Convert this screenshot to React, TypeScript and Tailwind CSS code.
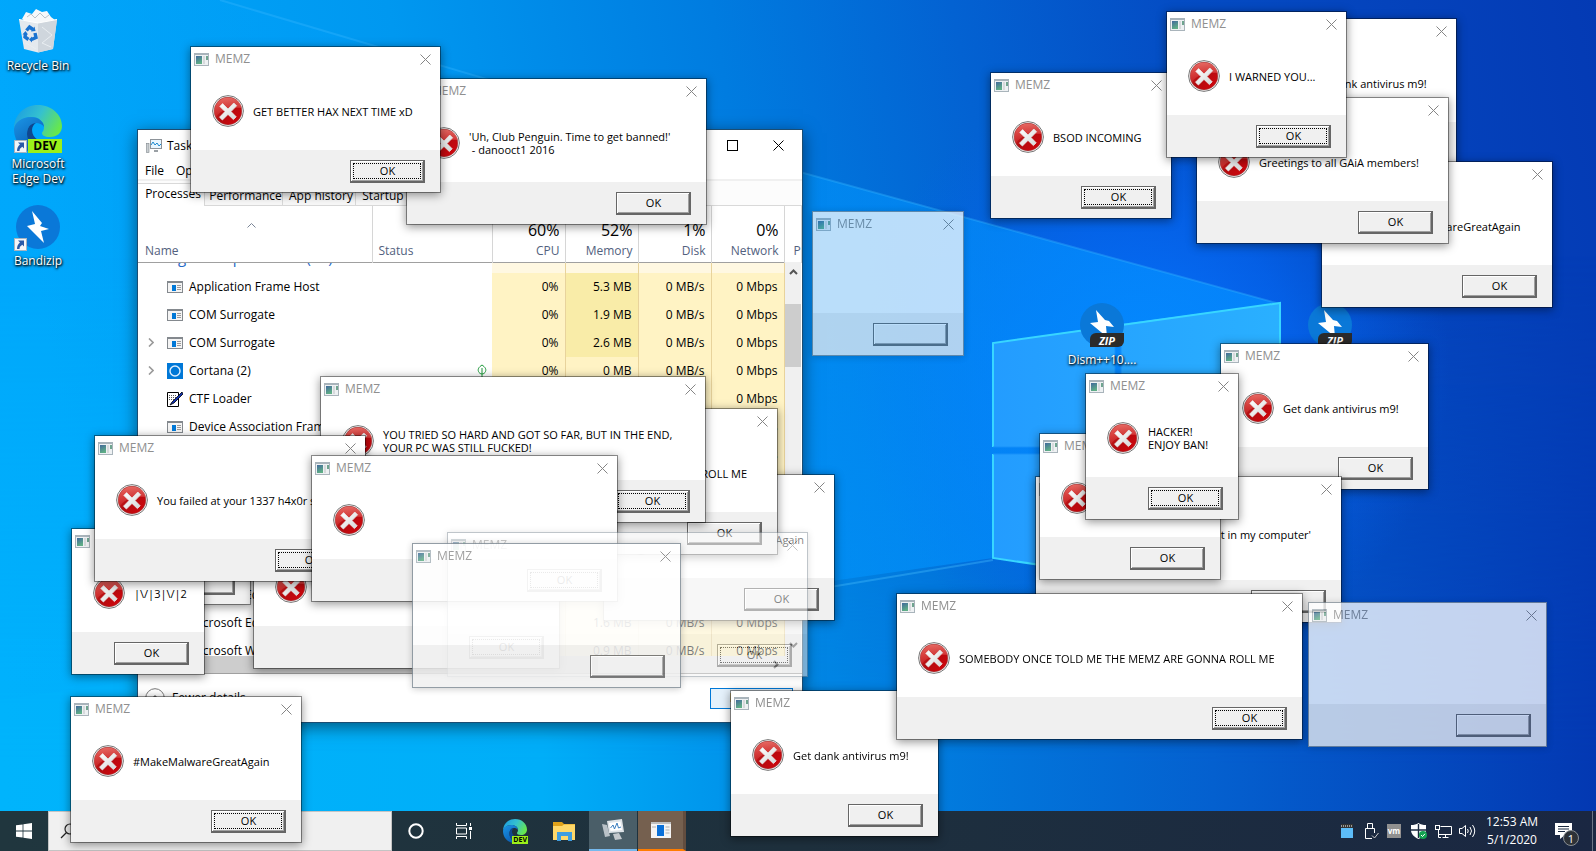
import React from "react";

type DialogProps = {
  place: string;
  lines?: string[];
  icon?: boolean;
  focused?: boolean;
  label?: string;
  fromEnd?: boolean;
  fading?: boolean;
};

function ErrorIcon() {
  return (
    <svg viewBox="0 0 32 32" className="size-8 shrink-0" aria-hidden="true">
      <defs>
        <linearGradient id="errBody" x1="0" y1="0" x2="1" y2="1">
          <stop offset="0" stopColor="#d9302c" />
          <stop offset="0.5" stopColor="#b30c10" />
          <stop offset="1" stopColor="#d8040c" />
        </linearGradient>
        <linearGradient id="errGloss" x1="0" y1="0" x2="0" y2="1">
          <stop offset="0" stopColor="#f08078" stopOpacity="0.75" />
          <stop offset="1" stopColor="#e04040" stopOpacity="0.35" />
        </linearGradient>
        <linearGradient id="errX" x1="0" y1="0" x2="1" y2="1">
          <stop offset="0" stopColor="#ffffff" />
          <stop offset="1" stopColor="#d4d8d8" />
        </linearGradient>
      </defs>
      <circle cx="16" cy="16" r="15.4" fill="#fff" stroke="#777" strokeWidth="1" />
      <circle cx="16" cy="16" r="13.9" fill="url(#errBody)" stroke="#8a5050" strokeWidth="0.5" />
      <path d="M2.4 17C2.4 8.600 8.500 2.400 16 2.400S29.600 8 29.600 13C22 12 10 13 4 22C2.900 20 2.400 19 2.400 17Z" fill="url(#errGloss)" />
      <path
        d="M10.600 8.600 16 14l5.800-6 2.800 2.800L19 16.600l5.200 5.200-2.800 2.800L16 19.400l-5.600 5.600-2.900-2.800L13 16.600 7.800 11.400Z"
        fill="url(#errX)"
        stroke="#e8e8e8"
        strokeWidth="0.8"
        strokeLinejoin="round"
      />
    </svg>
  );
}

function AppGlyph() {
  return (
    <svg viewBox="0 0 16 15" className="h-[15px] w-4 shrink-0" aria-hidden="true">
      <defs>
        <linearGradient id="glyphFill" x1="0" y1="0" x2="0.4" y2="1">
          <stop offset="0" stopColor="#41699c" />
          <stop offset="1" stopColor="#5fae86" />
        </linearGradient>
      </defs>
      <rect x="0.500" y="1.500" width="14" height="12" fill="#eef1f3" stroke="#a9b4bb" />
      <path d="M0 2H15" stroke="#a9b4bb" strokeWidth="2" />
      <rect x="2" y="4" width="6" height="8" fill="url(#glyphFill)" />
      <rect x="9" y="4" width="2" height="8" fill="#d7dadc" />
      <rect x="12" y="4" width="2" height="4" fill="#6fa48f" />
    </svg>
  );
}

function Cross({ className }: { className: string }) {
  return (
    <svg viewBox="0 0 11 11" className={className} aria-hidden="true">
      <path d="M.5.5l10 10M10.500.5l-10 10" stroke="currentColor" strokeWidth="1" fill="none" />
    </svg>
  );
}

function Dialog({ place, lines = [], icon = true, focused, label = "OK", fromEnd, fading }: DialogProps) {
  const frame = fading
    ? "border-[#7f8b94] shadow-[0_1px_7px_rgba(0,0,0,0.25)]"
    : "border-[#00000066] shadow-[0_2px_9px_rgba(0,0,0,0.42)]";
  return (
    <section aria-label="MEMZ" className={`absolute flex flex-col border bg-white bg-clip-padding ${frame} ${place}`}>
      <header className="flex h-6 items-center pl-[3px] pr-[9px] text-xs text-[#8f8f8f]">
        <AppGlyph />
        <h2 className="ml-[5px] flex-1 leading-none">MEMZ</h2>
        <button type="button" aria-label="Close" className="text-[#858585]">
          <Cross className="size-[11px]" />
        </button>
      </header>
      <div className={`flex gap-[9px] overflow-hidden pl-[21px] pr-[30px] pt-6 ${fading ? "h-[77px]" : "h-[79px]"}`}>
        {icon && <ErrorIcon />}
        <p
          className={`flex h-8 min-w-0 flex-1 flex-col justify-center whitespace-pre text-[11px] leading-[13px] text-black ${
            fromEnd ? "items-end" : "items-start"
          }`}
        >
          {lines.map((line) => (
            <span key={line}>{line}</span>
          ))}
        </p>
      </div>
      <footer className="flex h-[42px] items-start justify-end bg-[#f0f0f0] pr-[15px] pt-[10px]">
        <button
          type="button"
          aria-label="OK"
          className="flex h-[23px] w-[75px] items-stretch border border-b-2 border-r-2 border-[#666] bg-[#f0f0f0] p-[2px] text-[11px] leading-none text-black shadow-[inset_1px_1px_0_#fff,inset_-1px_-1px_0_#a0a0a0]"
        >
          <span
            className={`flex flex-1 items-center justify-center border pb-[2px] pl-px ${
              focused ? "border-dotted border-black" : "border-transparent"
            }`}
          >
            {label}
          </span>
        </button>
      </footer>
    </section>
  );
}

const dank = ["Get dank antivirus m9!"];
const great = ["#MakeMalwareGreatAgain"];
const somebody = ["SOMEBODY ONCE TOLD ME THE MEMZ ARE GONNA ROLL ME"];

const dialogs: DialogProps[] = [
  { place: "left-[406px] top-[78px] w-[301px]", lines: ["'Uh, Club Penguin. Time to get banned!'", " - danooct1 2016"] },
  { place: "left-[190px] top-[46px] w-[251px]", lines: ["GET BETTER HAX NEXT TIME xD"], focused: true },
  { place: "left-[1248px] top-[18px] w-[209px]", lines: dank },
  { place: "left-[1321px] top-[161px] w-[232px]", lines: great },
  { place: "left-[1196px] top-[97px] w-[253px]", lines: ["Greetings to all GAiA members!"] },
  { place: "left-[990px] top-[72px] w-[182px]", lines: ["BSOD INCOMING"], focused: true },
  { place: "left-[1166px] top-[11px] w-[181px]", lines: ["I WARNED YOU..."], focused: true },
  { place: "left-[812px] top-[211px] w-[152px] opacity-[0.73]", icon: false, label: "", fading: true },
  { place: "left-[1220px] top-[343px] w-[209px]", lines: dank },
  { place: "left-[1035px] top-[476px] w-[307px]", lines: ["t in my computer'", " "], fromEnd: true, label: "" },
  { place: "left-[1039px] top-[433px] w-[182px]" },
  { place: "left-[1085px] top-[373px] w-[154px]", lines: ["HACKER!", "ENJOY BAN!"], focused: true },
  { place: "left-[603px] top-[474px] w-[232px]", lines: great, fromEnd: true },
  { place: "left-[371px] top-[408px] w-[407px]", lines: ["ROLL ME"], fromEnd: true },
  {
    place: "left-[320px] top-[376px] w-[386px]",
    lines: ["YOU TRIED SO HARD AND GOT SO FAR, BUT IN THE END,", "YOUR PC WAS STILL FUCKED!"],
    focused: true,
  },
  { place: "left-[99px] top-[458px] w-[152px]", label: "" },
  { place: "left-[253px] top-[522px] w-[307px]", focused: true },
  { place: "left-[71px] top-[528px] w-[134px]", lines: ["|\\/|3|\\/|2"] },
  { place: "left-[94px] top-[435px] w-[272px]", lines: ["You failed at your 1337 h4x0r s"], focused: true },
  { place: "left-[311px] top-[455px] w-[307px]", focused: true },
  { place: "left-[70px] top-[696px] w-[232px]", lines: great, focused: true },
  { place: "left-[447px] top-[532px] w-[361px] opacity-50", icon: false, focused: true, fading: true },
  { place: "left-[412px] top-[543px] w-[269px] opacity-[0.84]", icon: false, label: "", fading: true },
  { place: "left-[730px] top-[690px] w-[209px]", lines: dank },
  { place: "left-[896px] top-[593px] w-[407px]", lines: somebody, focused: true },
  { place: "left-[1308px] top-[602px] w-[239px] opacity-[0.77]", icon: false, label: "", fading: true },
];

function Wallpaper() {
  return (
    <svg viewBox="0 0 1596 851" preserveAspectRatio="none" className="absolute inset-0 h-full w-full" aria-hidden="true">
      <defs>
        <linearGradient id="sky" x1="0" y1="0.1" x2="1" y2="0">
          <stop offset="0" stopColor="#00a8fc" />
          <stop offset="0.25" stopColor="#0098f0" />
          <stop offset="0.45" stopColor="#007ce0" />
          <stop offset="0.6" stopColor="#0362d2" />
          <stop offset="0.74" stopColor="#044cc4" />
          <stop offset="1" stopColor="#043ab4" />
        </linearGradient>
        <linearGradient id="low" x1="0" y1="0" x2="1" y2="0">
          <stop offset="0" stopColor="#00b4fc" />
          <stop offset="0.34" stopColor="#00aef8" />
          <stop offset="0.52" stopColor="#0086e4" />
          <stop offset="0.76" stopColor="#0460cf" />
          <stop offset="1" stopColor="#0338b2" />
        </linearGradient>
        <linearGradient id="lowFade" x1="0" y1="0" x2="0" y2="1">
          <stop offset="0.3" stopColor="#fff" stopOpacity="0" />
          <stop offset="0.9" stopColor="#fff" />
        </linearGradient>
        <mask id="lowMask">
          <rect width="1596" height="851" fill="url(#lowFade)" />
        </mask>
        <radialGradient id="glow" gradientUnits="userSpaceOnUse" cx="1150" cy="370" r="300">
          <stop offset="0" stopColor="#0676ff" />
          <stop offset="0.5" stopColor="#0568f4" stopOpacity="0.7" />
          <stop offset="1" stopColor="#0560e8" stopOpacity="0" />
        </radialGradient>
        <linearGradient id="beam" x1="0" y1="0" x2="1" y2="0">
          <stop offset="0" stopColor="#00a6fb" stopOpacity="0.1" />
          <stop offset="0.5" stopColor="#0098fc" stopOpacity="0.6" />
          <stop offset="1" stopColor="#058cff" />
        </linearGradient>
        <linearGradient id="pane" x1="0" y1="0" x2="1" y2="0">
          <stop offset="0" stopColor="#239cff" />
          <stop offset="1" stopColor="#2ab0ff" />
        </linearGradient>
      </defs>
      <rect width="1596" height="851" fill="url(#sky)" />
      <rect width="1596" height="851" fill="url(#low)" mask="url(#lowMask)" />
      <circle cx="1150" cy="370" r="300" fill="url(#glow)" />
      <path d="M220 0 800 172 1280 304V600L993 558 700 600 0 700V0Z" fill="url(#beam)" opacity="0.8" />
      <path d="M220 0 800 172 1280 304" stroke="#38b6ff" strokeOpacity="0.35" strokeWidth="2" fill="none" />
      <path d="M800 592 993 560" stroke="#4cc4ff" strokeOpacity="0.35" strokeWidth="2" fill="none" />
      <path d="M993 343 1115 325V447H993ZM1121 324 1280 303V447H1121ZM993 454H1115V573L993 558ZM1121 454H1280V600L1121 575Z" fill="url(#pane)" />
      <path d="M993 447V343L1280 303V447M993 454V558L1280 600V454" stroke="#38d6ff" strokeWidth="2" fill="none" />
      <path d="M993 447H1280M993 454H1280M1115 325V573M1121 324V574" stroke="#1690fa" strokeWidth="1" fill="none" />
    </svg>
  );
}

function ShortcutArrow() {
  return (
    <svg viewBox="0 0 13 13" className="absolute bottom-0 left-0 size-[13px]" aria-hidden="true">
      <rect x="0.500" y="0.500" width="12" height="12" fill="#f4f6f8" stroke="#a8b4c0" />
      <path d="M4 2.500H10V8.500L8.300 6.800C6.500 8 5.500 9 5.500 11H3C3 8 4 6 6 4.500Z" fill="#2a5aa8" />
    </svg>
  );
}

function RecycleBin() {
  return (
    <svg viewBox="0 0 40 44" className="h-11 w-10" aria-hidden="true">
      <path d="M4 10 8 3 14 5 18 0 24 3 29 2 33 8 37 11 30 14H10Z" fill="#f6f8fa" />
      <path d="M9 8 13 5 17 9 22 4 27 9 31 6" stroke="#b9c2ca" fill="none" />
      <path d="M1 10.500 20 14 39 10.500 35 40 20 43.500 6 40Z" fill="#e4e9ee" />
      <path d="M20 14 39 10.500 35 40 20 43.500Z" fill="#cfd6dd" />
      <path d="M1 10.500 20 14 39 10.500" stroke="#fff" fill="none" strokeWidth="1" />
      <path d="M24 18 34 26 24 34 33 38M8 34 18 40" stroke="#e9eef2" fill="none" />
      <g fill="none" stroke="#1a73d0" strokeWidth="3.400">
        <path d="M8.500 21.500 11.500 18 15 20.500" />
        <path d="M17 24 18 28.500 13.500 30.500" />
        <path d="M10.500 30.500 7 28 7.500 24.500" />
      </g>
      <path d="M13 22.500 17.500 22 16.500 17.500ZM14 27.500V33.500L11 30.500ZM4.500 25.500 7.500 22 10 25.500Z" fill="#1a73d0" />
    </svg>
  );
}

function EdgeLogo({ className }: { className: string }) {
  return (
    <svg viewBox="0 0 48 48" className={className} aria-hidden="true">
      <defs>
        <linearGradient id="edgeTop" x1="0" y1="0.2" x2="1" y2="0.6">
          <stop offset="0" stopColor="#1b9de2" />
          <stop offset="0.5" stopColor="#35c1cf" />
          <stop offset="1" stopColor="#68e84a" />
        </linearGradient>
        <linearGradient id="edgeLow" x1="0" y1="0" x2="0.6" y2="1">
          <stop offset="0" stopColor="#1b96e6" />
          <stop offset="1" stopColor="#0a5cb4" />
        </linearGradient>
      </defs>
      <path d="M0 24C0 10 10 0 24 0S48 10 48 21C48 28 43 32 36 32C30 32 28 30 28 28C28 27 30 26 30 22C30 17 25 12 17 12C8 12 1 18 0 24Z" fill="url(#edgeTop)" />
      <path d="M0 24C1 17 8 12 17 12C25 12 30 17 30 22C28 19 25 18 22 18C16 18 13 23 13 29C13 38 19 45 28 47.500C12 50 0 39 0 24Z" fill="url(#edgeLow)" />
      <path d="M22 18C16 18 13 23 13 29C13 38 19 46 29 47.300C36 46 41 42 44 37C34 41 18 36 18 25C18 22 20 19 22 18Z" fill="#10478f" />
    </svg>
  );
}

function Bolt({ zip }: { zip?: boolean }) {
  return (
    <svg viewBox="0 0 44 44" className="size-11" aria-hidden="true">
      <circle cx="22" cy="22" r="22" fill="#0a78d8" />
      {zip ? (
        <path d="M16 7 25 17 29 18 34 24 26 23 27 34 10 20 18 19Z" fill="#fff" />
      ) : (
        <path d="M16 6 26 18 24 21 33 24 25 26 28 38 11 21 19 19Z" fill="#fff" />
      )}
    </svg>
  );
}

const shade = "[text-shadow:1px_1px_2px_#000,0_1px_3px_#000]";

function DesktopIcon({ place, label, children }: { place: string; label: React.ReactNode; children: React.ReactNode }) {
  return (
    <a href="#open" className={`absolute flex w-[76px] flex-col items-center text-center text-xs leading-[15px] text-white ${shade} ${place}`}>
      {children}
      <span className="whitespace-nowrap">{label}</span>
    </a>
  );
}

function ZipPicture() {
  return (
    <span className="relative mb-[5px] block">
      <Bolt zip />
      <span className="absolute bottom-0 right-0 flex h-[14px] w-[34px] items-center justify-center rounded-br-md rounded-tl-md bg-[#2b2b2b] text-[11px] font-bold italic leading-none [text-shadow:none]">
        ZIP
      </span>
    </span>
  );
}

function ProcessIcon({ kind }: { kind: string }) {
  if (kind === "cortana")
    return (
      <svg viewBox="0 0 16 16" className="size-4" aria-hidden="true">
        <rect width="16" height="16" fill="#0078d7" />
        <circle cx="8" cy="8" r="5" fill="none" stroke="#dff0ff" strokeWidth="1.400" />
      </svg>
    );
  if (kind === "ctf")
    return (
      <svg viewBox="0 0 16 16" className="size-4" aria-hidden="true">
        <path d="M.5 1.500H11.500V15.500H.5Z" fill="#fff" stroke="#000" />
        <path d="M2 4.500H10M2 6.500H9M2 8.500H7" stroke="#555" strokeDasharray="1 1" />
        <path d="M15 1 5 11 3 14 7 12 16 3Z" fill="#1030b0" stroke="#000" strokeWidth="0.800" />
      </svg>
    );
  return (
    <svg viewBox="0 0 16 16" className="size-4" aria-hidden="true">
      <rect x="0.500" y="2.500" width="15" height="11" fill="#f4f4f4" stroke="#84898e" />
      <path d="M0 3H16" stroke="#84898e" strokeWidth="2" />
      <rect x="5" y="6" width="4" height="6" fill="#0078d7" />
      <path d="M10 6.500H14M10 8.500H14M10 10.500H14" stroke="#9a9a9a" />
    </svg>
  );
}

type Process = { name: string; kind?: string; group?: boolean; memory: string; heavy?: boolean; leaf?: boolean };

const processes: Process[] = [
  { name: "Application Frame Host", memory: "5.3 MB", heavy: true },
  { name: "COM Surrogate", memory: "1.9 MB", heavy: true },
  { name: "COM Surrogate", memory: "2.6 MB", heavy: true, group: true },
  { name: "Cortana (2)", memory: "0 MB", kind: "cortana", group: true, leaf: true },
  { name: "CTF Loader", memory: "", kind: "ctf" },
  { name: "Device Association Framewo...", memory: "" },
  { name: "", memory: "" },
  { name: "", memory: "" },
  { name: "", memory: "" },
  { name: "", memory: "" },
  { name: "", memory: "" },
  { name: "Microsoft Edge", memory: "" },
  { name: "Microsoft Edge", memory: "1.6 MB" },
  { name: "Microsoft Windows", memory: "0.9 MB" },
];

const numCell = "border-r border-[#e8d39c] pr-[6px] text-right";
const tab = "h-[21px] border border-[#d9d9d9] bg-[#f8f8f8] pl-1";

function TaskManager() {
  return (
    <section
      aria-label="Task Manager"
      className="absolute left-[137px] top-[129px] flex h-[594px] w-[666px] flex-col border border-[#1b4d73] bg-white text-xs text-black shadow-[0_4px_16px_rgba(0,0,0,0.5)]"
    >
      <header className="flex h-[31px] shrink-0 items-center pl-2">
        <svg viewBox="0 0 16 14" className="h-[14px] w-4" aria-hidden="true">
          <rect x="4.500" y="0.500" width="11" height="9" fill="#e8f6ff" stroke="#8d9399" />
          <path d="M5 6 7 3 9 6 11 4 13 7 15 5" stroke="#1c8ad0" fill="none" />
          <path d="M8 11H12V13H8Z" fill="#9aa0a5" />
          <rect x="0.500" y="4.500" width="2.500" height="9" fill="#c9ced2" stroke="#7e858b" strokeWidth="0.600" />
        </svg>
        <h1 className="ml-[5px] flex-1">Task Manager</h1>
        <button type="button" aria-label="Maximize" className="mr-[35px] size-[11px] border border-black" />
        <button type="button" aria-label="Close" className="mr-[18px]">
          <Cross className="size-[11px]" />
        </button>
      </header>
      <nav className="flex h-[20px] shrink-0 items-center gap-3 border-b-2 border-[#f0f0f0] pl-[7px] pt-[2px]">
        <button type="button">File</button>
        <button type="button">Options</button>
      </nav>
      <div role="tablist" className="flex h-[25px] shrink-0 items-end bg-[#fcfcfc]">
        <button type="button" role="tab" aria-selected="true" className="h-[23px] w-[66px] border-t border-[#d9d9d9] bg-white pb-[2px] pl-1">
          Processes
        </button>
        <button type="button" role="tab" className={`${tab} w-[79px]`}>Performance</button>
        <button type="button" role="tab" className={`${tab} w-[73px] border-l-0`}>App history</button>
        <button type="button" role="tab" className={`${tab} w-[51px] border-l-0`}>Startup</button>
        <span className="h-px flex-1 bg-[#d9d9d9]" />
      </div>
      <div className="relative h-[450px] shrink-0 overflow-hidden">
        <table className="w-[664px] table-fixed border-collapse text-xs">
          <colgroup>
            <col className="w-[234px]" />
            <col className="w-[120px]" />
            <col className="w-[73px]" />
            <col className="w-[73px]" />
            <col className="w-[73px]" />
            <col className="w-[73px]" />
            <col />
          </colgroup>
          <thead className="text-[#52617e]">
            <tr className="h-[56px] border-b border-[#a0a0a0] bg-white align-bottom [&>th]:border-r [&>th]:border-[#d6d6d6] [&>th]:font-normal [&>th]:leading-[16px]">
              <th className="pb-[3px] pl-[7px] text-left">
                <svg viewBox="0 0 9 5" className="mb-[15px] ml-[102px] h-[5px] w-[9px]" aria-hidden="true">
                  <path d="M.5 4.500 4.500.5 8.500 4.500" stroke="#7a8596" fill="none" />
                </svg>
                Name
              </th>
              <th className="pb-[3px] pl-[6px] text-left">Status</th>
              {[
                ["60%", "CPU"],
                ["52%", "Memory"],
                ["1%", "Disk"],
                ["0%", "Network"],
              ].map(([value, title]) => (
                <th key={title} className="pb-[3px] pr-[5px] text-right">
                  <span className="mb-[4px] block text-base leading-[18px] text-black">{value}</span>
                  {title}
                </th>
              ))}
              <th className="overflow-hidden whitespace-nowrap pb-[3px] pl-[9px] text-left">P</th>
            </tr>
          </thead>
          <tbody>
            <tr>
              <td colSpan={2} className="h-[10px] p-0">
                <div className="flex h-[10px] items-end overflow-hidden pl-[7px]">
                  <span className="mb-[7px] text-[15px] leading-[18px] text-[#2468c8]">Background processes (31)</span>
                </div>
              </td>
              {[0, 1, 2, 3].map((n) => (
                <td key={n} className="border-r border-[#e8d39c] bg-[#fff8e2]" />
              ))}
              <td />
            </tr>
            {processes.map((p, i) => (
              <tr key={i} className="h-7">
                <td className="p-0">
                  <div className="flex items-center overflow-hidden whitespace-nowrap pl-[10px]">
                    <span className="w-[19px]">
                      {p.group && (
                        <svg viewBox="0 0 6 9" className="h-[9px] w-[6px]" aria-hidden="true">
                          <path d="M1 .5 5 4.500 1 8.500" stroke="#9a9a9a" strokeWidth="1.600" fill="none" />
                        </svg>
                      )}
                    </span>
                    {p.name && <ProcessIcon kind={p.kind ?? "window"} />}
                    <span className="ml-[6px]">{p.name}</span>
                  </div>
                </td>
                <td className="p-0 pr-[5px]">
                  {p.leaf && (
                    <svg viewBox="0 0 10 13" className="ml-auto h-[13px] w-[10px]" aria-hidden="true">
                      <path d="M5 1C8 3 9.500 5 8.500 7.500 8 9 6.500 10 5 10S2 9 1.500 7.500C.5 5 2 3 5 1ZM5 4V13" stroke="#1f9a3c" fill="none" />
                    </svg>
                  )}
                </td>
                <td className={`${numCell} bg-[#fff3c4]`}>{i < 4 && "0%"}</td>
                <td className={`${numCell} ${p.heavy ? "bg-[#f9eca8]" : "bg-[#fff3c4]"}`}>{p.memory}</td>
                <td className={`${numCell} bg-[#fff3c4]`}>0 MB/s</td>
                <td className={`${numCell} bg-[#fff3c4]`}>0 Mbps</td>
                <td />
              </tr>
            ))}
          </tbody>
        </table>
        <div className="absolute bottom-0 right-px top-[56px] flex w-4 flex-col items-center bg-[#f0f0f0] pt-[7px]">
          <svg viewBox="0 0 9 6" className="h-[6px] w-[9px]" aria-hidden="true">
            <path d="M1 5 4.500 1.500 8 5" stroke="#555" strokeWidth="2" fill="none" />
          </svg>
          <div className="mt-[29px] h-[63px] w-full bg-[#cdcdcd]" />
          <svg viewBox="0 0 9 6" className="mt-[275px] h-[6px] w-[9px]" aria-hidden="true">
            <path d="M1 1 4.500 4.500 8 1" stroke="#555" strokeWidth="2" fill="none" />
          </svg>
        </div>
      </div>
      <div className="flex h-[18px] shrink-0 items-center border-b border-[#a0a0a0] bg-[#f0f0f0]">
        <div className="h-full w-[460px] bg-[#cdcdcd]" />
        <svg viewBox="0 0 6 9" className="ml-[175px] h-[9px] w-[6px]" aria-hidden="true">
          <path d="M1 1 4.500 4.500 1 8" stroke="#555" strokeWidth="2" fill="none" />
        </svg>
      </div>
      <footer className="flex flex-1 items-center pl-[7px] pr-[9px]">
        <button type="button" className="flex flex-1 items-center gap-[7px]">
          <svg viewBox="0 0 20 20" className="size-5" aria-hidden="true">
            <circle cx="10" cy="10" r="9.300" stroke="#777" fill="none" />
            <path d="M6.500 11.500 10 8 13.500 11.500" stroke="#777" strokeWidth="1.500" fill="none" />
          </svg>
          Fewer details
        </button>
        <button type="button" className="h-[21px] w-[83px] border border-[#0078d7] bg-[#e5f1fb] pl-1">End task</button>
      </footer>
    </section>
  );
}

function Taskbar() {
  return (
    <footer className="relative flex h-10 items-stretch bg-linear-to-r from-[#20363e] via-[#1e303d] to-[#1a2742] text-white">
      <button type="button" aria-label="Start" className="flex w-12 items-center justify-center">
        <svg viewBox="0 0 16 16" className="size-4" aria-hidden="true">
          <path d="M0 2.300 6.600 1.400V7.600H0ZM7.400 1.300 16 0V7.600H7.400ZM0 8.400H6.600V14.600L0 13.700ZM7.400 8.400H16V16L7.400 14.700Z" fill="#fff" />
        </svg>
      </button>
      <label className="flex w-[344px] items-center border border-[#c4c4c4] bg-[#f0f0f0] pl-[11px]">
        <svg viewBox="0 0 16 16" className="size-4" aria-hidden="true">
          <circle cx="10" cy="6" r="5" stroke="#222" strokeWidth="1.200" fill="none" />
          <path d="M6.500 9.500 1 15" stroke="#222" strokeWidth="1.200" />
        </svg>
        <input aria-label="Search" className="ml-2 min-w-0 flex-1 bg-transparent text-sm text-black outline-none" />
      </label>
      <button type="button" aria-label="Cortana" className="flex w-12 items-center justify-center">
        <svg viewBox="0 0 16 16" className="size-4" aria-hidden="true">
          <circle cx="8" cy="8" r="6.700" stroke="#fff" strokeWidth="2" fill="none" />
        </svg>
      </button>
      <button type="button" aria-label="Task View" className="flex w-12 items-center justify-center">
        <svg viewBox="0 0 16 16" className="size-4" aria-hidden="true">
          <path d="M.5 0V2.500H10.500V0M.5 16V13.500H10.500V16M.5 5H10.500V11H.5ZM14.500 0V3M14.500 8V16" stroke="#fff" fill="none" />
          <rect x="13" y="4" width="3" height="3" fill="#fff" />
        </svg>
      </button>
      <button type="button" aria-label="Microsoft Edge Dev" className="flex w-[54px] items-center justify-center">
        <span className="relative">
          <EdgeLogo className="size-6" />
          <span className="absolute -bottom-px -right-px bg-[#9bf01a] px-px text-[7px] font-bold leading-[8px] text-black">DEV</span>
        </span>
      </button>
      <button type="button" aria-label="File Explorer" className="flex w-[43px] items-center justify-center">
        <svg viewBox="0 0 22 19" className="h-[19px] w-[22px]" aria-hidden="true">
          <path d="M0 0H9L11 2H22V18H0Z" fill="#e0a21a" />
          <path d="M0 4H9L11 2.500H22V18H0Z" fill="#ffd869" />
          <path d="M4 10H19V19H15V14H8V19H4Z" fill="#3f9de0" />
        </svg>
      </button>
      <button type="button" aria-label="Task Manager" className="ml-1 flex w-12 items-center justify-center border-b-2 border-[#76b9ed] bg-[#4a5e68]">
        <svg viewBox="0 0 24 22" className="h-[22px] w-6" aria-hidden="true">
          <path d="M6 2 21 0 23 13 8 14Z" fill="#dfe4e8" />
          <path d="M8 4 19.500 2.500 21 11 9.500 12Z" fill="#fff" />
          <path d="M9.500 9 12 6 13.500 10 16 4 17.500 9 20 8" stroke="#3b7ec0" fill="none" />
          <path d="M1 5 6 6 9 17 4 18Z" fill="#b9c1c7" />
          <path d="M12 15 18 14 21 20 14 21Z" fill="#c4c9cd" />
        </svg>
      </button>
      <button type="button" aria-label="MEMZ" className="ml-px flex w-12 items-center justify-center border-b-2 border-r-3 border-b-[#ff7d00] border-r-[#624d3f] bg-[#75604f]">
        <svg viewBox="0 0 20 16" className="h-4 w-5" aria-hidden="true">
          <rect width="20" height="16" fill="#f4f4f4" />
          <path d="M0 1H20" stroke="#c0c0c0" strokeWidth="2" />
          <rect x="6" y="3" width="7" height="11" fill="#0a70d8" />
          <path d="M14.500 5H18.500M14.500 8H18.500M14.500 11H18.500M1 5H5" stroke="#b0b0b0" />
        </svg>
      </button>
      <div className="ml-auto flex items-center">
        <svg viewBox="0 0 12 14" className="h-[14px] w-3" aria-hidden="true">
          <rect width="12" height="4" fill="#333" />
          <path d="M0 2H12" stroke="#999" strokeWidth="2" strokeDasharray="1 1" />
          <rect y="4" width="12" height="10" fill="#5cbcf8" />
        </svg>
        <svg viewBox="0 0 14 16" className="ml-3 h-4 w-[14px]" aria-hidden="true">
          <path d="M2.500 5V.5H7.500V5M.5 5.500H9.500V10M.5 5.500V15.500H7" stroke="#fff" fill="none" />
          <path d="M7 12.500 9.500 15 13.500 10" stroke="#c8c8c8" fill="none" />
        </svg>
        <span className="ml-2 flex size-[14px] items-center justify-center overflow-hidden bg-[#909090] text-[8px] font-bold leading-none">vm</span>
        <svg viewBox="0 0 16 16" className="ml-[10px] size-4" aria-hidden="true">
          <path d="M7.500 0C9.500 1.500 12 2 15 2V7C15 11 12 14 7.500 16 3 14 0 11 0 7V2C3 2 5.500 1.500 7.500 0Z" fill="#fff" />
          <path d="M7.500 1V15M0 7H15" stroke="#1b2a40" strokeWidth="1.400" />
          <circle cx="12" cy="12" r="4" fill="#12a150" />
          <path d="M10 12 11.500 13.500 14 10.800" stroke="#fff" fill="none" />
        </svg>
        <svg viewBox="0 0 17 15" className="ml-2 h-[15px] w-[17px]" aria-hidden="true">
          <path d="M5.500 2.500H16.500V10.500H3.500M3.500 6V13.500H6M10.500 10.500V13M7.500 13.500H13.500" stroke="#fff" fill="none" />
          <rect x="0.500" y="1.500" width="4" height="4" fill="#1b2a40" stroke="#fff" />
        </svg>
        <svg viewBox="0 0 17 14" className="ml-[7px] h-[14px] w-[17px]" aria-hidden="true">
          <path d="M.5 4.500H3L6.500 1.500V12.500L3 9.500H.5ZM8.500 5Q10 7 8.500 9M11 3Q14 7 11 11M13.500 1Q18 7 13.500 13" stroke="#fff" fill="none" />
        </svg>
        <time className="ml-[9px] flex w-[54px] flex-col items-center whitespace-nowrap text-xs leading-[18px]">
          <span>12:53 AM</span>
          <span>5/1/2020</span>
        </time>
        <button type="button" aria-label="Notifications" className="relative ml-4 mr-5">
          <svg viewBox="0 0 17 16" className="h-4 w-[17px]" aria-hidden="true">
            <path d="M0 0H17V12H10L5 16V12H0Z" fill="#fff" />
            <path d="M3 3.500H14M3 6H14M3 8.500H10" stroke="#1b2a40" />
          </svg>
          <span className="absolute -bottom-[7px] -right-[7px] flex size-4 items-center justify-center rounded-full border border-[#8a8f94] bg-[#2d3238] text-[11px] leading-none">1</span>
        </button>
        <span className="mr-[3px] h-10 w-px bg-[#6b7585]" />
      </div>
    </footer>
  );
}

export default function App() {
  return (
    <main className="relative flex min-h-screen flex-col overflow-hidden bg-[#0083e6] font-['Open_Sans','Noto_Sans',sans-serif]">
      <Wallpaper />
      <div className="relative flex-1">
        <DesktopIcon place="left-0 top-[9px]" label="Recycle Bin">
          <span className="mb-[5px]"><RecycleBin /></span>
        </DesktopIcon>
        <DesktopIcon place="left-0 top-[105px]" label={<>Microsoft<br />Edge Dev</>}>
          <span className="relative mb-[3px] block">
            <EdgeLogo className="size-12" />
            <ShortcutArrow />
            <span className="absolute bottom-0 right-0 flex h-[14px] w-[34px] items-center justify-center bg-[#9bf01a] text-xs font-bold leading-none text-black [text-shadow:none]">
              DEV
            </span>
          </span>
        </DesktopIcon>
        <DesktopIcon place="left-0 top-[205px]" label="Bandizip">
          <span className="relative mb-[2px] block pb-[2px]">
            <Bolt />
            <span className="absolute -left-[2px] bottom-0 size-[13px]"><ShortcutArrow /></span>
          </span>
        </DesktopIcon>
        <DesktopIcon place="left-[1064px] top-[303px]" label="Dism++10....">
          <ZipPicture />
        </DesktopIcon>
        <DesktopIcon place="left-[1292px] top-[303px]" label="">
          <ZipPicture />
        </DesktopIcon>
      </div>
      <Taskbar />
      <TaskManager />
      {dialogs.map((dialog) => (
        <Dialog key={dialog.place} {...dialog} />
      ))}
    </main>
  );
}
